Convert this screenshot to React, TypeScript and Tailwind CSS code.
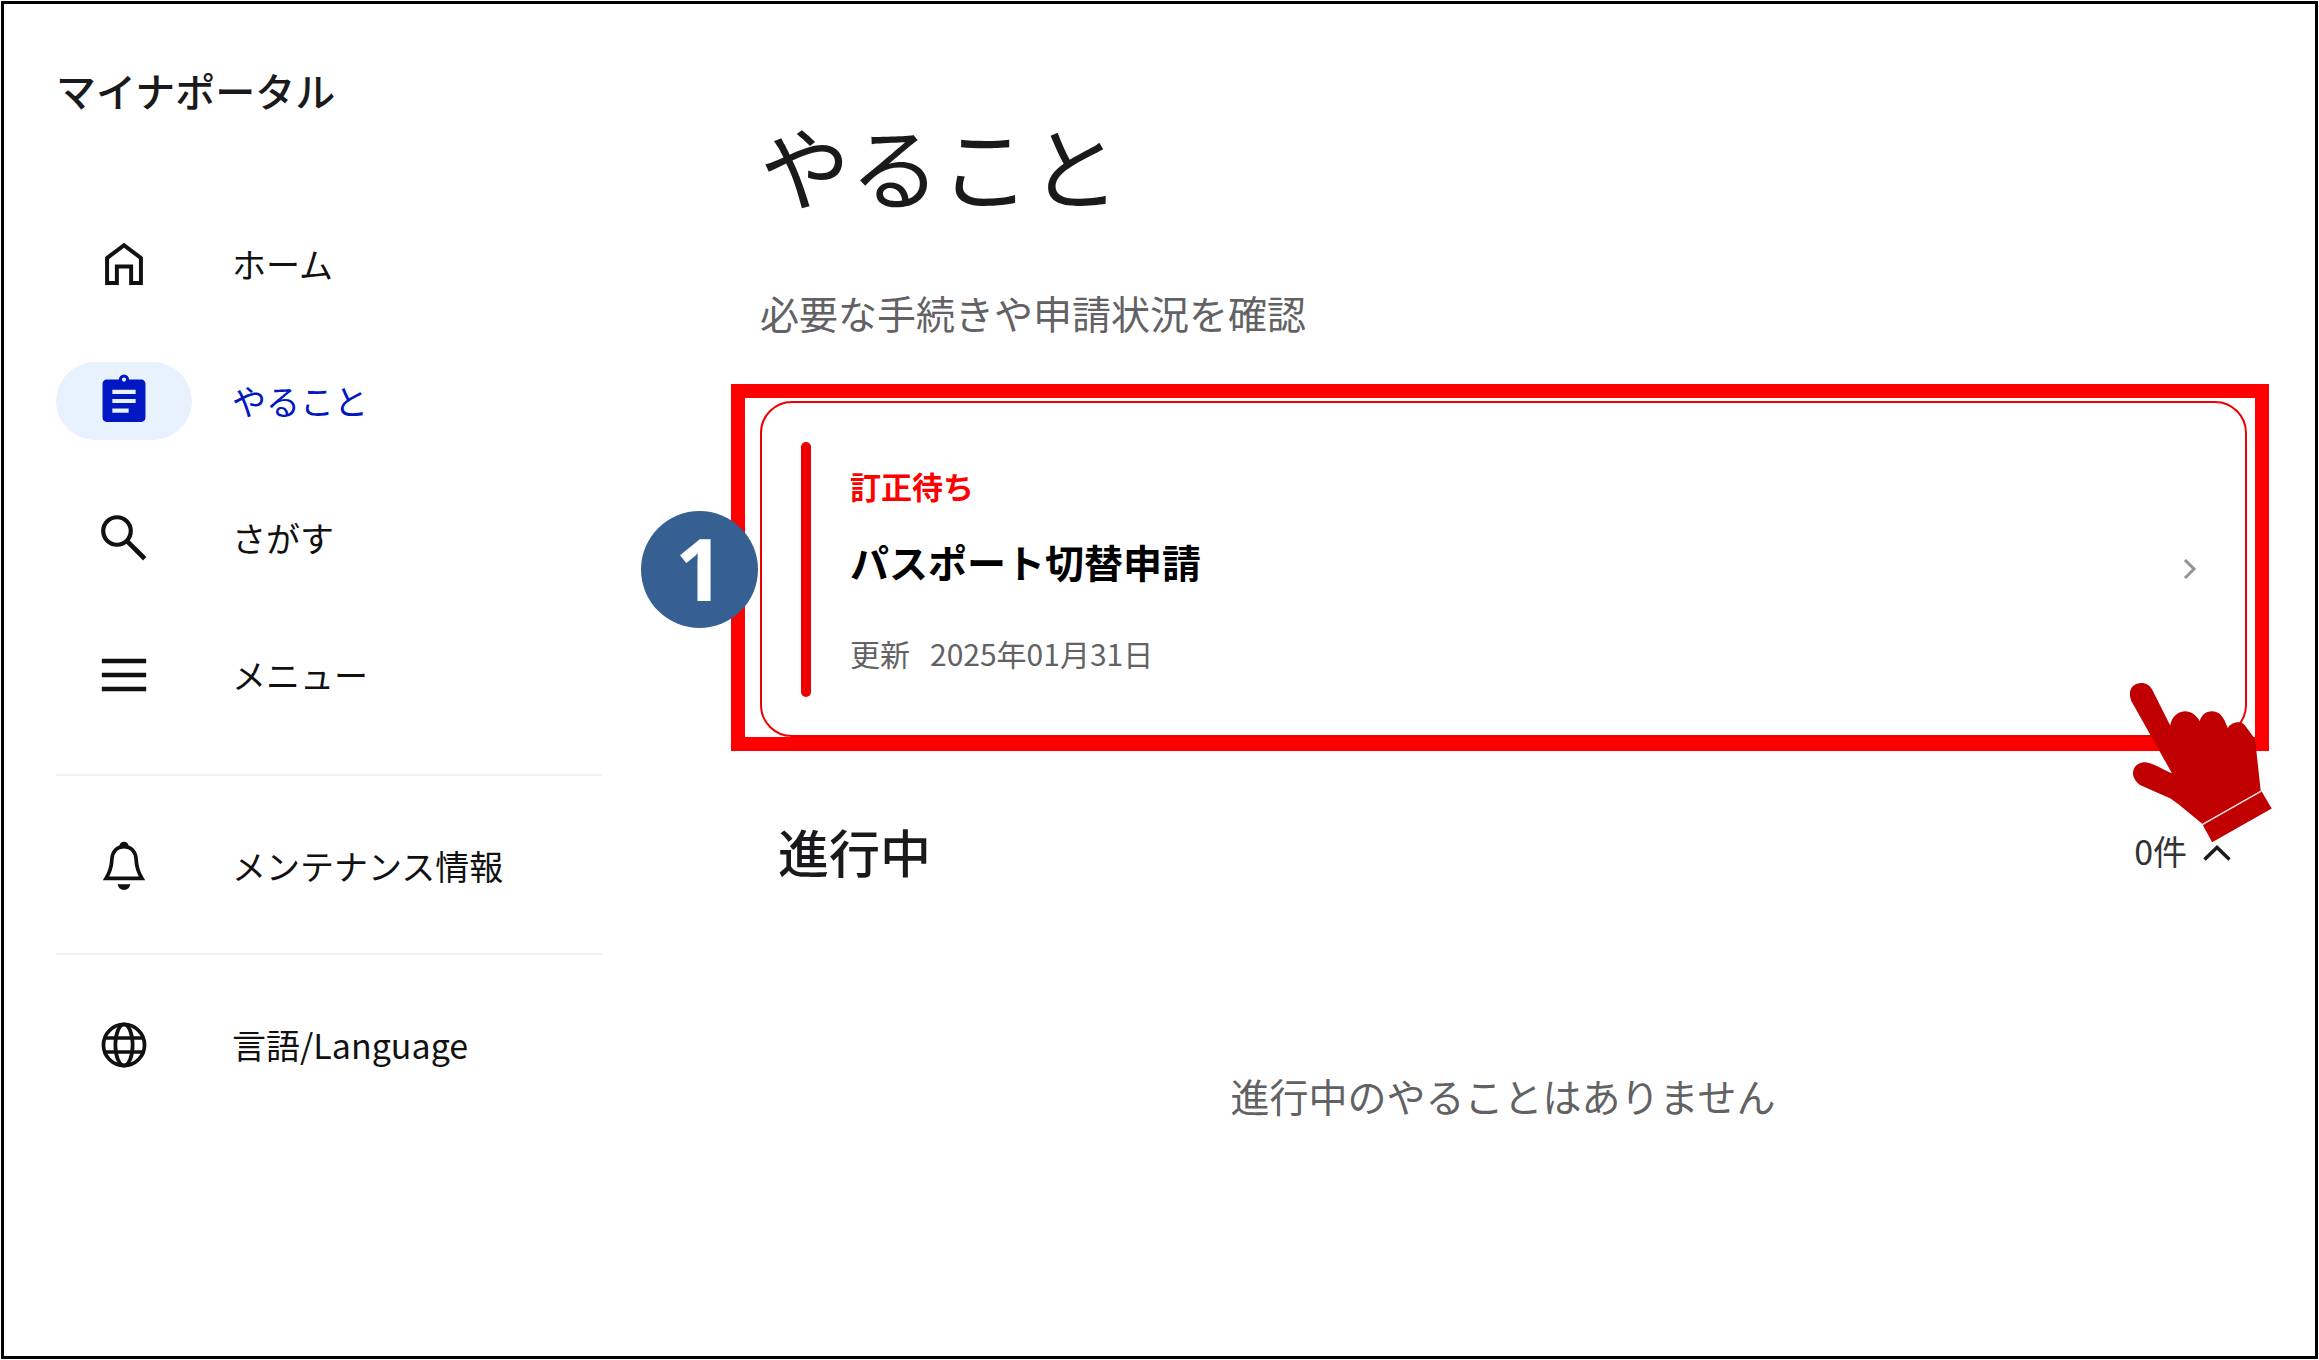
import React from 'react';
import { clsx } from 'clsx';

interface NavItem {
  label: string;
  icon: React.FC;
  active?: boolean;
}

const Icon: React.FC<{ children: React.ReactNode }> = ({ children }) => (
  <svg viewBox="0 0 24 24" className="w-14 h-14" fill="none" aria-hidden="true">
    {children}
  </svg>
);

const HomeIcon = () => (
  <Icon>
    <path
      fill="currentColor"
      fillRule="evenodd"
      d="M3.9 21V9L12 2.9 20.100 9v12h-5.900v-7.100H9.800V21H3.900Zm1.700-1.700h2.500v-7.100h7.800v7.100h2.500V9.850L12 5 5.600 9.850v9.450Z"
    />
  </Icon>
);

const TodoIcon = () => (
  <Icon>
    <path
      fill="currentColor"
      fillRule="evenodd"
      d="M14.200 2.800h5.200c1 0 1.800.8 1.800 1.800v14.600c0 1-.8 1.800-1.800 1.800H4.600c-1 0-1.800-.8-1.800-1.800V4.600c0-1 .8-1.800 1.800-1.800h5.200a2.200 2.200 0 0 1 4.400 0ZM12 1.900a.9.9 0 1 0 0 1.800.9.9 0 0 0 0-1.800ZM7 7.200V9h10V7.200H7Zm0 3.900v1.800h10v-1.800H7Zm0 4.100V17h7v-1.800H7Z"
    />
  </Icon>
);

const SearchIcon = () => (
  <Icon>
    <circle cx="9" cy="9" r="5.9" stroke="currentColor" strokeWidth="1.8" />
    <path d="m13.2 13.2 7.7 7.7" stroke="currentColor" strokeWidth="2" />
  </Icon>
);

const MenuIcon = () => (
  <Icon>
    <path fill="currentColor" d="M2.5 5h19v2h-19V5Zm0 6h19v2h-19v-2Zm0 6h19v2h-19v-2Z" />
  </Icon>
);

const BellIcon = () => (
  <Icon>
    <path
      d="M4.3 17.3C6 14.5 6.7 12 6.8 9.2 7 5.8 9 3.7 12 3.7s5 2.1 5.2 5.5c.1 2.8.8 5.3 2.5 8.1H4.3Z"
      stroke="currentColor"
      strokeWidth="1.6"
    />
    <path fill="currentColor" d="M10 3.6a2 2 0 0 1 4 0l-2 .6-2-.6ZM9.3 19.8h5.4a2.7 2.5 0 0 1-5.4 0Z" />
  </Icon>
);

const GlobeIcon = () => (
  <Icon>
    <g stroke="currentColor" strokeWidth="1.6">
      <circle cx="12" cy="12" r="8.8" />
      <ellipse cx="12" cy="12" rx="3.7" ry="8.8" />
      <path d="M3.8 9h16.4M3.8 15h16.4" />
    </g>
  </Icon>
);

const mainItems: NavItem[] = [
  { label: 'ホーム', icon: HomeIcon },
  { label: 'やること', icon: TodoIcon, active: true },
  { label: 'さがす', icon: SearchIcon },
  { label: 'メニュー', icon: MenuIcon },
];

const NavLink: React.FC<{ item: NavItem }> = ({ item }) => (
  <a
    href="#"
    aria-current={item.active ? 'page' : undefined}
    className={clsx('flex items-center gap-10 text-[34px] leading-[78px]', item.active ? 'text-[#0017c1]' : 'text-[#111111]')}
  >
    <span
      className={clsx(
        'flex h-[78px] w-[136px] items-center justify-center rounded-full',
        item.active && 'bg-[#e8f1fe]'
      )}
    >
      <item.icon />
    </span>
    {item.label}
  </a>
);

const Sidebar = () => (
  <aside className="w-[598px] shrink-0 pl-[52px] pt-14">
    <p className="text-[40px] leading-[60px] font-medium text-[#1a1a1c]">マイナポータル</p>
    <nav className="mt-[105px]">
      <ul className="flex flex-col gap-[59px]">
        {mainItems.map((item) => (
          <li key={item.label}>
            <NavLink item={item} />
          </li>
        ))}
      </ul>
      <hr className="mt-[60px] mb-[51px] border-t-2 border-[#f1f1f4]" />
      <NavLink item={{ label: 'メンテナンス情報', icon: BellIcon }} />
      <hr className="mt-12 mb-[51px] border-t-2 border-[#f1f1f4]" />
      <NavLink item={{ label: '言語/Language', icon: GlobeIcon }} />
    </nav>
  </aside>
);

const PointingHand = () => (
  <svg
    viewBox="326 930 434 484"
    className="absolute -right-[18px] -bottom-[106px] w-[145px] h-[161px]"
    aria-hidden="true"
  >
    <path
      fill="#c00000"
      d="M335 987C323 955 338 933 366 933c14 0 25 8 32 20l54 108c3-23 20-42 44-43 19 0 35 12 45 30 4-18 17-30 37-30 17 0 30 12 37 27l10 23c7-11 19-18 34-17 11 1 18 8 24 18l22 30c3 8 4 18 5 30l14 128-175 100c-33-27-64-55-96-77l-92-40c-13-11-21-24-21-36 1-20 15-33 38-33 22 3 50 21 79 33L335 987Z"
    />
    <path fill="#c00000" d="m550 1360 176-102 31 52-179 102-28-52Z" />
    <path d="m549 1358 177-100" stroke="#f5d5d5" strokeWidth="4" />
  </svg>
);

const TaskCard = () => (
  <div className="relative mt-[42px] -ml-[29px] -mr-[23px] border-[14px] border-[#ff0000] pt-[3px] pl-[15px] pr-2">
    <a href="#" className="flex h-[336px] items-center rounded-[32px] border-2 border-[#ec0000] pl-[39px] pr-12">
      <span className="h-[255px] w-[10px] shrink-0 rounded-full bg-[#ec0000]" />
      <div className="ml-[39px] flex-1">
        <p className="text-[31px] leading-[46px] font-bold text-[#fe0000]">訂正待ち</p>
        <h2 className="mt-[22px] text-[39px] leading-[60px] font-bold text-black">パスポート切替申請</h2>
        <p className="mt-10 flex gap-5 text-[30px] leading-[45px] text-[#626264]">
          <span>更新</span>
          <time dateTime="2025-01-31">2025年01月31日</time>
        </p>
      </div>
      <svg viewBox="0 0 14 22" className="h-[22px] w-[14px]" fill="none" aria-hidden="true">
        <path d="m2 2 9 9-9 9" stroke="#949497" strokeWidth="3" />
      </svg>
    </a>
    <span className="absolute -left-[104px] top-[113px] flex h-[117px] w-[117px] items-center justify-center rounded-full bg-[#376092] pb-1 font-['Noto_Sans'] text-[86px] leading-none font-bold text-white">
      1
    </span>
    <PointingHand />
  </div>
);

const InProgress = () => (
  <section className="mt-[62px]">
    <h2>
      <button type="button" aria-expanded="true" className="flex w-full items-center justify-between pl-[18px] pr-[14px] text-[#1a1a1c]">
        <span className="text-[51px] leading-[76px] font-medium">進行中</span>
        <span className="flex items-center gap-[15px] text-[34px] leading-[50px] text-[#333333]">
          0件
          <svg viewBox="0 0 30 22" className="h-[22px] w-[30px]" fill="none" aria-hidden="true">
            <path d="m2.500 19.500 12.500-12 12.500 12" stroke="#1a1a1c" strokeWidth="3.500" />
          </svg>
        </span>
      </button>
    </h2>
    <p className="mt-[176px] text-center text-[39px] leading-[60px] text-[#626264]">進行中のやることはありません</p>
  </section>
);

export default function App() {
  return (
    <div lang="ja" className="min-h-screen bg-white p-px font-['Noto_Sans_CJK_JP',sans-serif]">
      <div className="flex min-h-[calc(100vh-2px)] border-[3px] border-black">
        <Sidebar />
        <main className="flex-1 pl-[158px] pr-[69px] pt-[100px]">
          <h1 className="text-[90px] leading-[120px] text-[#1a1a1c]">やること</h1>
          <p className="mt-[58px] text-[39px] leading-[60px] text-[#626264]">必要な手続きや申請状況を確認</p>
          <TaskCard />
          <InProgress />
        </main>
      </div>
    </div>
  );
}
